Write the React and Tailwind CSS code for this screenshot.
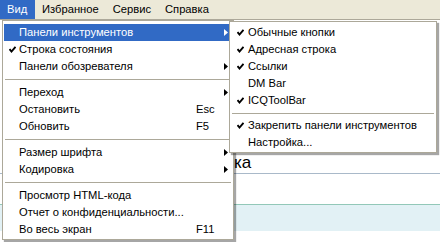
import React from 'react';

const font = { fontFamily: '"Liberation Sans", Tahoma, sans-serif' };

function Check({ white }) {
  return (
    <svg width="7" height="7" viewBox="0 0 7 7" className="block">
      <path d="M0.5 3 L2.5 5.5 L6.5 0.8" fill="none" stroke={white ? '#fff' : '#000'} strokeWidth="1.9" />
    </svg>
  );
}

function Arrow({ white }) {
  return (
    <svg width="4" height="7" viewBox="0 0 4 7" className="block">
      <path d="M0 0 L4 3.5 L0 7 Z" fill={white ? '#fff' : '#000'} />
    </svg>
  );
}

function Row({ label, checked, shortcut, sub, active }) {
  return (
    <div
      className={`flex items-center h-[17px] text-[11.2px] leading-none ${
        active ? 'bg-[#316ac5] text-white' : 'text-black'
      }`}
    >
      <div className="w-[15px] flex justify-center pl-[2px]">{checked && <Check white={active} />}</div>
      <span className="flex-1 whitespace-nowrap">{label}</span>
      <div className="w-[36px] flex items-center justify-between pr-[4px]">
        <span>{shortcut}</span>
        {sub && <Arrow white={active} />}
      </div>
    </div>
  );
}

function SubRow({ label, checked }) {
  return (
    <div className="flex items-center h-[17px] text-[11.2px] leading-none text-black">
      <div className="w-[17px] flex justify-center pl-[1px]">{checked && <Check />}</div>
      <span className="whitespace-nowrap">{label}</span>
    </div>
  );
}

function Sep({ h = 'h-[9px]' }) {
  return (
    <div className={`${h} flex items-center px-[1px]`}>
      <div className="h-px w-full bg-[#aca899]" />
    </div>
  );
}

export default function App() {
  return (
    <div className="relative w-[440px] h-[242px] overflow-hidden bg-white" style={font}>
      <div className="flex h-[20px] bg-[#ece9d8] border-b border-[#aca899] text-[11.2px] text-black">
        <div className="flex items-center px-[7px] w-[35px] bg-[#316ac5] text-white">Вид</div>
        <div className="flex items-center px-[7px]">Избранное</div>
        <div className="flex items-center px-[7px]">Сервис</div>
        <div className="flex items-center px-[7px]">Справка</div>
      </div>

      <div className="h-[153px] flex items-end pl-[234px] pb-[2px] text-[17px] leading-none text-black">ка</div>
      <div className="h-px bg-[#a9b9c9]" />
      <div className="h-[30px]" />
      <div className="h-[27px] bg-[#e2f1f5] border-t border-[#92c8b8]" />

      <div className="absolute left-[2px] top-[20px] w-[232px] bg-white border border-[#aca899] pt-[3px] pb-px px-[1px] shadow-[2px_2px_1px_rgba(0,0,0,0.35)]">
        <Row label="Панели инструментов" sub active />
        <Row label="Строка состояния" checked />
        <Row label="Панели обозревателя" sub />
        <Sep />
        <Row label="Переход" sub />
        <Row label="Остановить" shortcut="Esc" />
        <Row label="Обновить" shortcut="F5" />
        <Sep />
        <Row label="Размер шрифта" sub />
        <Row label="Кодировка" sub />
        <Sep />
        <Row label="Просмотр HTML-кода" />
        <Row label="Отчет о конфиденциальности..." />
        <Row label="Во весь экран" shortcut="F11" />
      </div>

      <div className="absolute left-[229px] top-[21px] w-[208px] bg-white border border-[#aca899] pt-[2px] pb-px px-[1px] shadow-[2px_2px_1px_rgba(0,0,0,0.35)]">
        <SubRow label="Обычные кнопки" checked />
        <SubRow label="Адресная строка" checked />
        <SubRow label="Ссылки" checked />
        <SubRow label="DM Bar" />
        <SubRow label="ICQToolBar" checked />
        <Sep h="h-[8px]" />
        <SubRow label="Закрепить панели инструментов" checked />
        <SubRow label="Настройка..." />
      </div>
    </div>
  );
}
